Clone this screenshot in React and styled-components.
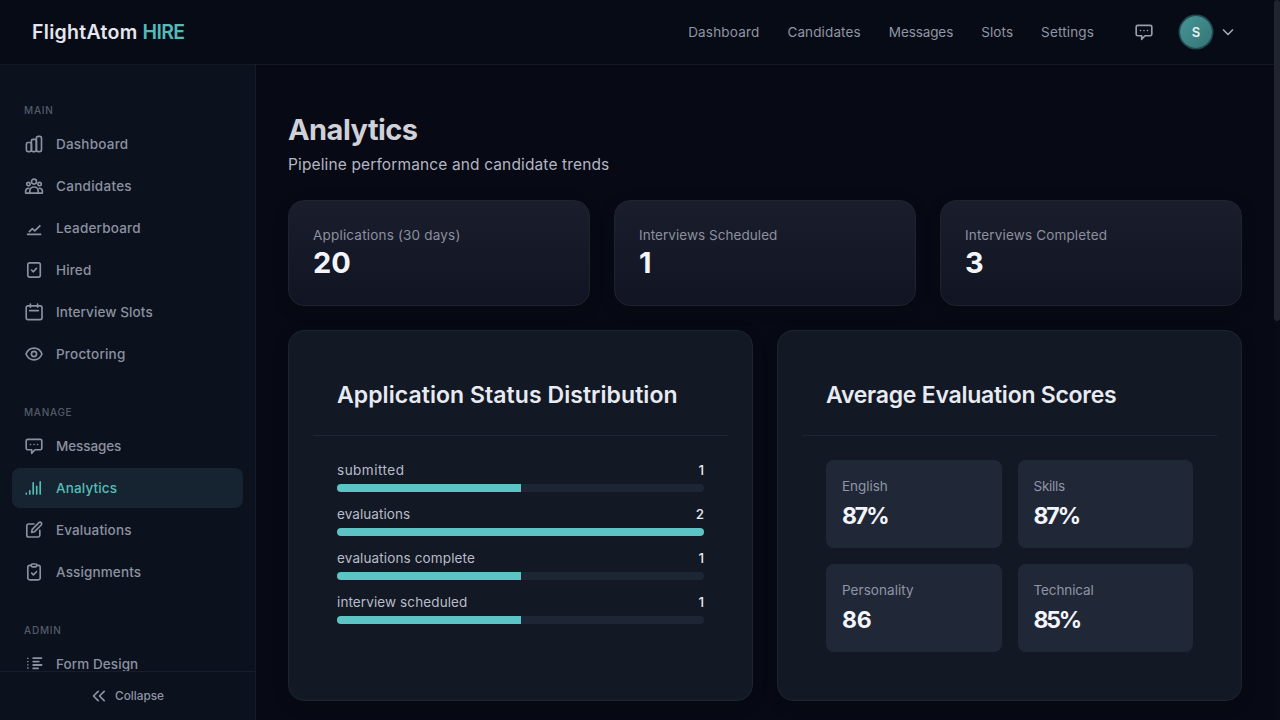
import React from "react";
import styled, { createGlobalStyle } from "styled-components";

const GlobalStyle = createGlobalStyle`
  * {
    box-sizing: border-box;
  }

  body {
    margin: 0;
    background: #070914;
    font-family: Inter, "Open Sans", sans-serif;
    overflow: hidden;
  }
`;

const Page = styled.div`
  display: flex;
  width: 1280px;
  height: 720px;
  overflow: hidden;
`;

const Shell = styled.div`
  flex: 1;
  display: flex;
  flex-direction: column;
  min-width: 0;
`;

const ScrollTrack = styled.div`
  width: 6px;
  background: #070b14;
`;

const ScrollThumb = styled.div`
  height: 321px;
  background: #20242f;
  border-radius: 3px;
`;

const Text = styled.span`
  letter-spacing: ${({ $track }) => $track || 0}px;
  white-space: nowrap;
`;

const Navbar = styled.header`
  flex: none;
  height: 65px;
  display: flex;
  align-items: center;
  justify-content: space-between;
  padding: 0 32px;
  background: #070b16;
  border-bottom: 1px solid #141925;
`;

const Logo = styled.div`
  display: flex;
  gap: 5px;
  font-size: 19.5px;
  font-weight: 600;
  line-height: 28px;
  color: #e6e6ee;
`;

const LogoAccent = styled(Text)`
  color: #56b9ba;
`;

const NavRight = styled.div`
  display: flex;
  align-items: center;
`;

const NavLinks = styled.nav`
  display: flex;
  gap: 28px;
  margin-right: 40px;
`;

const NavLink = styled.a`
  font-size: 13.5px;
  line-height: 20px;
  color: #9095a3;
`;

const MessageButton = styled.div`
  display: flex;
  margin-right: 26px;
  color: #9a9eac;
`;

const UserMenu = styled.div`
  display: flex;
  align-items: center;
  gap: 8px;
  padding-right: 6px;
  color: #a3a7b4;
`;

const Avatar = styled.div`
  width: 32px;
  height: 32px;
  border-radius: 50%;
  display: flex;
  align-items: center;
  justify-content: center;
  background: linear-gradient(135deg, #469596, #377476);
  box-shadow: 0 0 0 1.5px #1f4a50;
  color: #e3f1f2;
  font-size: 13px;
  font-weight: 600;
`;

const Body = styled.div`
  flex: 1;
  display: flex;
  min-height: 0;
`;

const Sidebar = styled.aside`
  width: 256px;
  display: flex;
  flex-direction: column;
  background: #0b111d;
  border-right: 1px solid #151b28;
`;

const Menu = styled.div`
  flex: 1;
  min-height: 0;
  overflow: hidden;
  padding: 37px 12px 0;
`;

const Section = styled.section`
  margin-bottom: 30px;
`;

const SectionLabel = styled.div`
  height: 16px;
  margin: 0 12px 6px;
  font-size: 10px;
  font-weight: 500;
  line-height: 16px;
  color: #555b69;
`;

const MenuList = styled.div`
  display: flex;
  flex-direction: column;
  gap: 2px;
`;

const MenuItem = styled.a`
  height: 40px;
  display: flex;
  align-items: center;
  gap: 12px;
  padding: 0 12px;
  border-radius: 8px;
  font-size: 13.5px;
  font-weight: 500;
  color: ${({ $active }) => ($active ? "#56bdb9" : "#8c91a0")};
  background: ${({ $active }) => ($active ? "#152430" : "transparent")};
`;

const Collapse = styled.div`
  flex: none;
  height: 49px;
  display: flex;
  align-items: center;
  justify-content: center;
  gap: 8px;
  border-top: 1px solid #171d2a;
  font-size: 11.8px;
  font-weight: 500;
  color: #9095a3;
`;

const Main = styled.main`
  flex: 1;
  min-width: 0;
  padding: 47px 32px 0;
`;

const Title = styled.h1`
  margin: 0 0 5px;
  font-size: 29px;
  font-weight: 700;
  line-height: 36px;
  color: #cfd0d8;
`;

const Subtitle = styled.p`
  margin: 0 0 23px;
  font-size: 15.5px;
  line-height: 24px;
  color: #b3b6c1;
`;

const StatGrid = styled.div`
  display: grid;
  grid-template-columns: repeat(3, 1fr);
  gap: 24px;
  margin-bottom: 24px;
`;

const StatCard = styled.div`
  height: 106px;
  padding: 24px;
  border: 1px solid #1f2330;
  border-radius: 16px;
  background: linear-gradient(180deg, #1a1d2b, #111422);
  box-shadow: 0 4px 16px rgba(0, 0, 0, 0.15);
`;

const StatLabel = styled.div`
  font-size: 13.5px;
  line-height: 20px;
  color: #8c909f;
`;

const StatValue = styled.div`
  font-size: 29px;
  font-weight: 700;
  line-height: 36px;
  color: #f3f5fb;
`;

const PanelGrid = styled.div`
  display: grid;
  grid-template-columns: repeat(2, 1fr);
  gap: 24px;
`;

const Panel = styled.section`
  height: 371px;
  padding: 24px;
  border: 1px solid #1d232f;
  border-radius: 16px;
  background: #121824;
  box-shadow: 0 4px 16px rgba(0, 0, 0, 0.15);
`;

const PanelHeader = styled.h2`
  margin: 0;
  padding: 24px;
  border-bottom: 1px solid #1e2532;
  font-size: 23px;
  font-weight: 600;
  line-height: 32px;
  color: #e8eaf2;
`;

const StatusList = styled.div`
  display: flex;
  flex-direction: column;
  gap: 12px;
  padding: 24px;
`;

const StatusHead = styled.div`
  display: flex;
  justify-content: space-between;
  margin-bottom: 4px;
  font-size: 13.5px;
  line-height: 20px;
  color: #b9bcc8;
`;

const StatusCount = styled.span`
  font-weight: 500;
  color: #e6e8f0;
`;

const Track = styled.div`
  height: 8px;
  border-radius: 4px;
  overflow: hidden;
  background: #1e2636;
`;

const Fill = styled.div`
  height: 100%;
  background: #5dc4c5;
`;

const ScoreGrid = styled.div`
  display: grid;
  grid-template-columns: repeat(2, 1fr);
  gap: 16px;
  padding: 24px;
`;

const ScoreTile = styled.div`
  height: 88px;
  padding: 16px;
  border-radius: 8px;
  background: #202838;
`;

const ScoreLabel = styled.div`
  margin-bottom: 4px;
  font-size: 13.5px;
  line-height: 20px;
  color: #8f95a4;
`;

const ScoreValue = styled.div`
  font-size: 23px;
  font-weight: 700;
  line-height: 32px;
  color: #f3f5fb;
`;

const Svg = styled.svg`
  flex: none;
  fill: none;
  stroke: currentColor;
  stroke-width: 1.65;
  stroke-linecap: round;
  stroke-linejoin: round;
`;

const Icon = ({ children }) => (
  <Svg width="20" height="20" viewBox="0 0 20 20">
    {children}
  </Svg>
);

const BarsIcon = () => (
  <Icon>
    <rect x="2.4" y="8.5" width="5" height="9.1" rx="1.6" />
    <rect x="7.4" y="5.3" width="5" height="12.3" rx="1.6" />
    <rect x="12.4" y="2.3" width="5.1" height="15.3" rx="1.8" />
  </Icon>
);

const PeopleIcon = () => (
  <Icon>
    <circle cx="10" cy="5.6" r="2.5" />
    <circle cx="4.4" cy="8" r="1.7" />
    <circle cx="15.6" cy="8" r="1.7" />
    <path d="M5.8 17.1v-2.2a4.2 3.9 0 0 1 8.4 0v2.2" />
    <path d="M4.8 12.3c-2-.1-3.2 1.2-3.2 3v1.8h16.8v-1.8c0-1.8-1.2-3.1-3.2-3" />
  </Icon>
);

const TrendIcon = () => (
  <Icon>
    <path d="M3.7 16.3h12.8M5.4 13.5l3-2.9 2.4 2.2 5-4.9" strokeLinecap="square" />
  </Icon>
);

const HiredIcon = () => (
  <Icon>
    <rect x="3.8" y="2.9" width="12.5" height="14.2" rx="1.8" />
    <path d="M7.5 10l1.9 1.8 3-3.4" />
  </Icon>
);

const CalendarIcon = () => (
  <Icon>
    <rect x="2.2" y="3.8" width="15.8" height="13.8" rx="1.8" />
    <path d="M6.4 2v3.2M13.6 2v3.2M5.6 8.6h8.8" />
  </Icon>
);

const EyeIcon = () => (
  <Icon>
    <path d="M2 10c1.6-3.9 4.6-5.9 8-5.9s6.4 2 8 5.9c-1.6 3.9-4.6 5.9-8 5.9S3.6 13.9 2 10z" />
    <circle cx="10" cy="10" r="2.6" />
  </Icon>
);

const MessageIcon = () => (
  <Icon>
    <path d="M3.7 3.3h12.6a1.5 1.5 0 0 1 1.5 1.5v7.4a1.5 1.5 0 0 1-1.5 1.5H11l-3.3 3.6v-3.6h-4a1.5 1.5 0 0 1-1.5-1.5V4.8a1.5 1.5 0 0 1 1.5-1.5z" />
    <path d="M6.5 8.5h.01M10 8.5h.01M13.5 8.5h.01" />
  </Icon>
);

const AnalyticsIcon = () => (
  <Icon>
    <path d="M2.3 15.2v.9M5.8 12.7v3.4M9.2 4.7v11.4M12.7 8.3v7.8M16.2 3.7v12.4" />
  </Icon>
);

const EditIcon = () => (
  <Icon>
    <path d="M10 4H4.6A1.8 1.8 0 0 0 2.8 5.8v9.4A1.8 1.8 0 0 0 4.6 17H14a1.8 1.8 0 0 0 1.8-1.8v-5" />
    <path d="M7.6 12.4l.6-3.1 6.7-6.6a1.5 1.5 0 0 1 2.3 2.3l-6.6 6.7z" />
  </Icon>
);

const ClipboardIcon = () => (
  <Icon>
    <path d="M7.2 3.4H5.6a1.8 1.8 0 0 0-1.8 1.8V16a1.8 1.8 0 0 0 1.8 1.8h8.8a1.8 1.8 0 0 0 1.8-1.8V5.2a1.8 1.8 0 0 0-1.8-1.8h-1.6" />
    <rect x="7.2" y="2" width="5.6" height="2.9" rx="1.3" />
    <path d="M7.7 11.2l1.7 1.7 3.1-3.2" />
  </Icon>
);

const FormIcon = () => (
  <Icon>
    <path
      d="M3.1 4.4h1.4M3.1 7.6h1.4M3.1 10.8h1.4M3.1 14h1.4"
      strokeWidth="1.3"
      strokeLinecap="butt"
    />
    <path d="M9.2 4.2h8.2M9.2 7.6h5.6M9.2 11h8.4M9.2 14.4H14" strokeWidth="1.8" />
  </Icon>
);

const sections = [
  {
    label: "Main",
    track: 0.8,
    items: [
      { title: "Dashboard", track: 0.22, icon: BarsIcon },
      { title: "Candidates", track: 0.28, icon: PeopleIcon },
      { title: "Leaderboard", track: 0.19, icon: TrendIcon },
      { title: "Hired", track: 0.15, icon: HiredIcon },
      { title: "Interview Slots", track: 0.1, icon: CalendarIcon },
      { title: "Proctoring", track: 0.2, icon: EyeIcon },
    ],
  },
  {
    label: "Manage",
    track: 0.72,
    items: [
      { title: "Messages", track: -0.09, icon: MessageIcon },
      { title: "Analytics", track: 0.15, icon: AnalyticsIcon, active: true },
      { title: "Evaluations", track: 0.12, icon: EditIcon },
      { title: "Assignments", track: 0.13, icon: ClipboardIcon },
    ],
  },
  {
    label: "Admin",
    track: 0.8,
    items: [{ title: "Form Design", track: 0.08, icon: FormIcon }],
  },
];

const navLinks = [
  { title: "Dashboard", track: 0.18 },
  { title: "Candidates", track: 0.13 },
  { title: "Messages", track: -0.1 },
  { title: "Slots", track: 0.1 },
  { title: "Settings", track: 0.15 },
];

const stats = [
  { label: "Applications (30 days)", value: "20", track: 0.19, valueTrack: 0 },
  { label: "Interviews Scheduled", value: "1", track: 0.05 },
  { label: "Interviews Completed", value: "3", track: 0.15 },
];

const statuses = [
  { label: "submitted", count: 1, track: 0.5 },
  { label: "evaluations", count: 2, track: 0.07 },
  { label: "evaluations complete", count: 1, track: 0.13 },
  { label: "interview scheduled", count: 1, track: 0.11 },
];

const maxCount = Math.max(...statuses.map((s) => s.count));

const scores = [
  { label: "English", value: "87%", track: -0.05, valueTrack: -2.1 },
  { label: "Skills", value: "87%", track: -0.28, valueTrack: -2.1 },
  { label: "Personality", value: "86", track: 0.05, valueTrack: -0.3 },
  { label: "Technical", value: "85%", track: -0.11, valueTrack: -2.2 },
];

const App = () => {
  return (
    <>
      <GlobalStyle />
      <Page>
        <Shell>
          <Navbar>
            <Logo>
              <Text $track={0.3}>FlightAtom</Text>
              <LogoAccent $track={-0.65}>HIRE</LogoAccent>
            </Logo>
            <NavRight>
              <NavLinks>
                {navLinks.map((link) => (
                  <NavLink key={link.title}>
                    <Text $track={link.track}>{link.title}</Text>
                  </NavLink>
                ))}
              </NavLinks>
              <MessageButton>
                <MessageIcon />
              </MessageButton>
              <UserMenu>
                <Avatar>S</Avatar>
                <Svg width="16" height="16" viewBox="0 0 16 16">
                  <path d="M3.5 6L8 10.5 12.5 6" />
                </Svg>
              </UserMenu>
            </NavRight>
          </Navbar>

          <Body>
            <Sidebar>
              <Menu>
                {sections.map((section) => (
                  <Section key={section.label}>
                    <SectionLabel>
                      <Text $track={section.track}>
                        {section.label.toUpperCase()}
                      </Text>
                    </SectionLabel>
                    <MenuList>
                      {section.items.map((item) => (
                        <MenuItem key={item.title} $active={item.active}>
                          <item.icon />
                          <Text $track={item.track}>{item.title}</Text>
                        </MenuItem>
                      ))}
                    </MenuList>
                  </Section>
                ))}
              </Menu>
              <Collapse>
                <Svg width="16" height="16" viewBox="0 0 16 16">
                  <path d="M7.2 3.3L2.5 8l4.7 4.7M13.2 3.3L8.5 8l4.7 4.7" />
                </Svg>
                <Text>Collapse</Text>
              </Collapse>
            </Sidebar>

            <Main>
              <Title>
                <Text $track={-0.55}>Analytics</Text>
              </Title>
              <Subtitle>
                <Text $track={0.13}>
                  Pipeline performance and candidate trends
                </Text>
              </Subtitle>

              <StatGrid>
                {stats.map((stat) => (
                  <StatCard key={stat.label}>
                    <StatLabel>
                      <Text $track={stat.track}>{stat.label}</Text>
                    </StatLabel>
                    <StatValue>
                      <Text $track={stat.valueTrack}>{stat.value}</Text>
                    </StatValue>
                  </StatCard>
                ))}
              </StatGrid>

              <PanelGrid>
                <Panel>
                  <PanelHeader>
                    <Text $track={0.06}>Application Status Distribution</Text>
                  </PanelHeader>
                  <StatusList>
                    {statuses.map((status) => (
                      <div key={status.label}>
                        <StatusHead>
                          <Text $track={status.track}>{status.label}</Text>
                          <StatusCount>{status.count}</StatusCount>
                        </StatusHead>
                        <Track>
                          <Fill
                            style={{
                              width: `${(status.count / maxCount) * 100}%`,
                            }}
                          />
                        </Track>
                      </div>
                    ))}
                  </StatusList>
                </Panel>

                <Panel>
                  <PanelHeader>
                    <Text $track={-0.25}>Average Evaluation Scores</Text>
                  </PanelHeader>
                  <ScoreGrid>
                    {scores.map((score) => (
                      <ScoreTile key={score.label}>
                        <ScoreLabel>
                          <Text $track={score.track}>{score.label}</Text>
                        </ScoreLabel>
                        <ScoreValue>
                          <Text $track={score.valueTrack}>{score.value}</Text>
                        </ScoreValue>
                      </ScoreTile>
                    ))}
                  </ScoreGrid>
                </Panel>
              </PanelGrid>
            </Main>
          </Body>
        </Shell>
        <ScrollTrack>
          <ScrollThumb />
        </ScrollTrack>
      </Page>
    </>
  );
};

export default App;
